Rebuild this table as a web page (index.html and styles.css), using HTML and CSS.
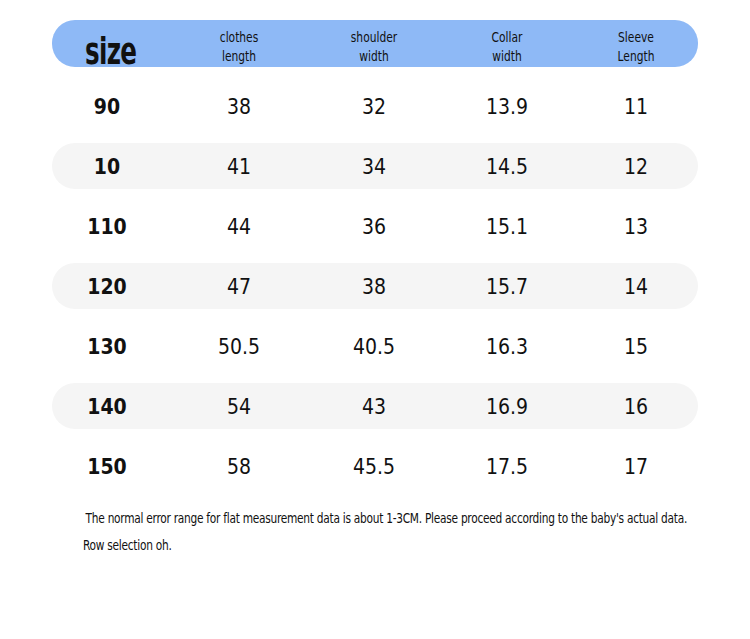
FILE: index.html
```html
<!DOCTYPE html>
<html>
<head>
<meta charset="utf-8">
<link rel="stylesheet" href="styles.css">
</head>
<body>
<div class="chart">
  <div class="row head">
    <div class="cell size-cell"><span class="size-label">size</span></div>
    <div class="cell lbl">clothes<br>length</div>
    <div class="cell lbl">shoulder<br>width</div>
    <div class="cell lbl">Collar<br>width</div>
    <div class="cell lbl">Sleeve<br>Length</div>
  </div>
  <div class="row"><div class="cell sz">90</div><div class="cell">38</div><div class="cell">32</div><div class="cell">13.9</div><div class="cell">11</div></div>
  <div class="row alt"><div class="cell sz">10</div><div class="cell">41</div><div class="cell">34</div><div class="cell">14.5</div><div class="cell">12</div></div>
  <div class="row"><div class="cell sz">110</div><div class="cell">44</div><div class="cell">36</div><div class="cell">15.1</div><div class="cell">13</div></div>
  <div class="row alt"><div class="cell sz">120</div><div class="cell">47</div><div class="cell">38</div><div class="cell">15.7</div><div class="cell">14</div></div>
  <div class="row"><div class="cell sz">130</div><div class="cell">50.5</div><div class="cell">40.5</div><div class="cell">16.3</div><div class="cell">15</div></div>
  <div class="row alt"><div class="cell sz">140</div><div class="cell">54</div><div class="cell">43</div><div class="cell">16.9</div><div class="cell">16</div></div>
  <div class="row"><div class="cell sz">150</div><div class="cell">58</div><div class="cell">45.5</div><div class="cell">17.5</div><div class="cell">17</div></div>
</div>
<div class="note">
  <p class="l1">The normal error range for flat measurement data is about 1-3CM. Please proceed according to the baby's actual data.</p>
  <p class="l2">Row selection oh.</p>
</div>
</body>
</html>
```
FILE: styles.css
```css
html, body {
  margin: 0;
  padding: 0;
  background: #ffffff;
}
body {
  font-family: "DejaVu Sans Condensed", "DejaVu Sans", sans-serif;
  color: #111111;
  width: 750px;
  height: 639px;
  overflow: hidden;
}
.chart {
  margin: 20px 0 0 52px;
  width: 646px;
  display: flex;
  flex-direction: column;
  gap: 14px;
}
.row {
  display: grid;
  grid-template-columns: 110px 154px 116px 150px 108px;
  height: 46px;
  align-items: center;
  border-radius: 23px;
  font-size: 21px;
  padding-top: 2px;
  box-sizing: border-box;
}
.row.head {
  height: 47px;
  background: #8eb9f6;
  margin-bottom: 2px;
  font-size: 13.5px;
  line-height: 19px;
  align-items: end;
  padding-top: 0;
  padding-bottom: 1px;
}
.row.alt {
  background: #f5f5f5;
}
.cell {
  text-align: center;
}
.lbl {
  transform: scaleX(0.88);
  transform-origin: center;
}
.size-cell {
  text-align: left;
  padding-left: 33px;
  line-height: 34px;
  margin-bottom: -2px;
}
.size-label {
  display: inline-block;
  font-size: 38px;
  font-weight: bold;
  transform: translateY(8px) scaleX(0.72);
  transform-origin: left center;
  letter-spacing: -1px;
}
.sz {
  font-weight: bold;
}
.note {
  margin: 16px 0 0 83px;
  font-size: 13.5px;
  letter-spacing: -0.3px;
}
.note p {
  margin: 0;
  line-height: 27px;
  white-space: nowrap;
  transform: scaleX(0.873);
  transform-origin: left center;
}
.note .l1 {
  padding-left: 3px;
}
```
